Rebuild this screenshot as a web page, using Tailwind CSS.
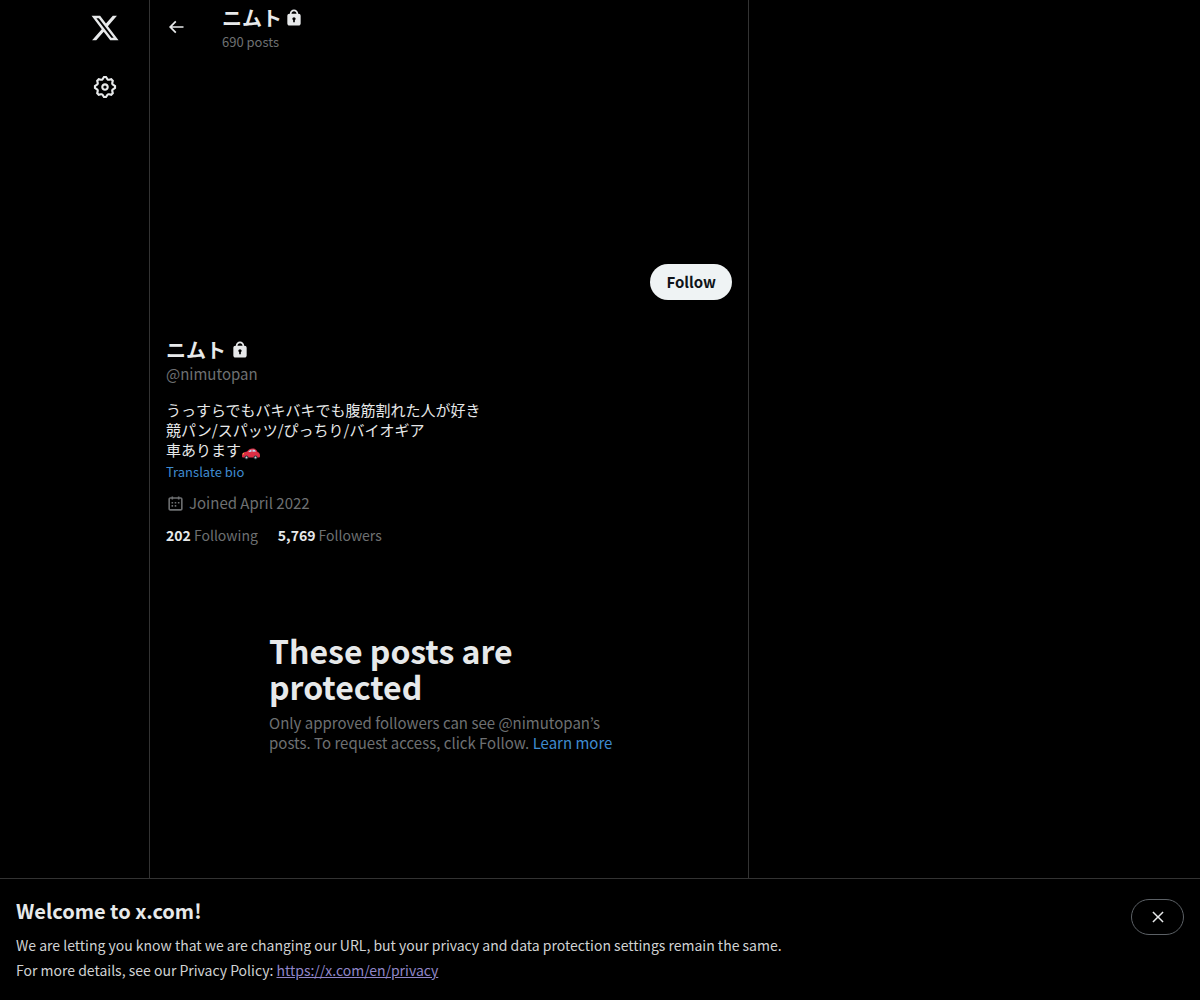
<!DOCTYPE html>
<html lang="en">
<head>
    <meta charset="UTF-8">
    <meta name="viewport" content="width=device-width, initial-scale=1.0">
    <title>ニムト (@nimutopan) / X</title>
    <script src="https://cdn.jsdelivr.net/npm/@tailwindcss/browser@4"></script>
</head>
<body class="bg-black text-[#e7e9ea] font-['Noto_Sans_CJK_JP',sans-serif] text-[15px] leading-5">
    <div class="grid grid-cols-[149px_minmax(0,600px)_1fr] min-h-screen">
        <!-- Sidebar -->
        <header class="flex flex-col items-end pr-[18px]">
            <a href="#" aria-label="X" class="flex items-center justify-center w-[52px] h-14">
                <svg viewBox="0 0 24 24" class="w-[30px] h-[30px] fill-current"><path d="M18.244 2.25h3.308l-7.227 8.26 8.502 11.24H16.17l-5.214-6.817L4.99 21.75H1.68l7.73-8.835L1.254 2.25H8.08l4.713 6.231zm-1.161 17.52h1.833L7.084 4.126H5.117z"/></svg>
            </a>
            <nav>
                <a href="#" aria-label="Settings" class="flex items-center justify-center w-[52px] h-[62px]">
                    <svg viewBox="0 0 24 24" class="w-[26px] h-[26px] fill-current"><path d="M10.54 1.75h2.92l1.57 2.36c.11.17.32.25.53.21l2.53-.59 2.17 2.17-.58 2.54c-.05.2.04.41.21.53l2.36 1.57v2.92l-2.36 1.57c-.17.12-.26.33-.21.53l.58 2.54-2.17 2.17-2.53-.59c-.21-.04-.42.04-.53.21l-1.57 2.36h-2.92l-1.58-2.36c-.11-.17-.32-.25-.52-.21l-2.54.59-2.17-2.17.58-2.54c.05-.2-.03-.41-.21-.53l-2.35-1.57v-2.92L4.1 8.97c.18-.12.26-.33.21-.53L3.73 5.9 5.9 3.73l2.54.59c.2.04.41-.04.52-.21l1.58-2.36zm1.07 2l-.98 1.47C10.05 6.08 9 6.5 7.99 6.27l-1.46-.34-.6.6.33 1.46c.24 1.01-.18 2.07-1.05 2.64l-1.46.98v.78l1.46.98c.87.57 1.29 1.63 1.05 2.64l-.33 1.46.6.6 1.46-.34c1.01-.23 2.06.19 2.64 1.05l.98 1.47h.78l.97-1.47c.58-.86 1.63-1.28 2.65-1.05l1.45.34.61-.6-.34-1.46c-.23-1.01.18-2.07 1.05-2.64l1.47-.98v-.78l-1.47-.98c-.87-.57-1.28-1.63-1.05-2.64l.34-1.46-.61-.6-1.45.34c-1.02.23-2.07-.19-2.65-1.05l-.97-1.47h-.78zM12 10.5c-.83 0-1.5.67-1.5 1.5s.67 1.5 1.5 1.5c.82 0 1.5-.67 1.5-1.5s-.68-1.5-1.5-1.5zM8.5 12c0-1.93 1.56-3.5 3.5-3.5 1.93 0 3.5 1.57 3.5 3.5s-1.57 3.5-3.5 3.5c-1.94 0-3.5-1.57-3.5-3.5z"/></svg>
                </a>
            </nav>
        </header>

        <main class="border-x border-[#333333] pb-32">
            <!-- Top bar -->
            <div class="flex items-center h-[53px] px-4">
                <button aria-label="Back" class="w-14 h-5">
                    <svg viewBox="0 0 24 24" class="w-5 h-5 fill-current"><path d="M7.414 13l5.043 5.04-1.414 1.42L3.586 12l7.457-7.46 1.414 1.42L7.414 11H21v2H7.414z"/></svg>
                </button>
                <div class="pt-[2px]">
                    <h2 class="flex items-center gap-[2px] text-xl leading-6 font-bold">
                        ニムト
                        <svg viewBox="0 0 24 24" class="w-5 h-5 fill-current" role="img" aria-label="Protected account"><path d="M17.5 7H17v-.25c0-2.76-2.24-5-5-5s-5 2.24-5 5V7h-.5C5.12 7 4 8.12 4 9.5v9C4 19.88 5.12 21 6.5 21h11c1.39 0 2.5-1.12 2.5-2.5v-9C20 8.12 18.89 7 17.5 7zM13 14.73V17h-2v-2.27c-.59-.34-1-.99-1-1.73 0-1.1.9-2 2-2 1.11 0 2 .9 2 2 0 .74-.4 1.39-1 1.73zM15 7H9v-.25c0-1.66 1.35-3 3-3 1.66 0 3 1.34 3 3V7z"/></svg>
                    </h2>
                    <p class="text-[13px] leading-4 text-[#6e7072] mt-1">690 posts</p>
                </div>
            </div>

            <!-- Banner image, empty for this account -->
            <div class="h-[199px]"></div>

            <!-- Profile -->
            <section class="px-4 pt-3">
                <div class="flex justify-end h-[72px]">
                    <button class="h-9 px-4 rounded-full bg-[#eff3f4] text-[#0f1419] font-bold">Follow</button>
                </div>
                <h1 class="flex items-center gap-1 text-xl leading-6 font-bold mt-[2px]">
                    ニムト
                    <svg viewBox="0 0 24 24" class="w-5 h-5 fill-current" role="img" aria-label="Protected account"><path d="M17.5 7H17v-.25c0-2.76-2.24-5-5-5s-5 2.24-5 5V7h-.5C5.12 7 4 8.12 4 9.5v9C4 19.88 5.12 21 6.5 21h11c1.39 0 2.5-1.12 2.5-2.5v-9C20 8.12 18.89 7 17.5 7zM13 14.73V17h-2v-2.27c-.59-.34-1-.99-1-1.73 0-1.1.9-2 2-2 1.11 0 2 .9 2 2 0 .74-.4 1.39-1 1.73zM15 7H9v-.25c0-1.66 1.35-3 3-3 1.66 0 3 1.34 3 3V7z"/></svg>
                </h1>
                <p class="text-[#6e7072] mt-[2px]">@nimutopan</p>
                <p lang="ja" class="mt-4">
                    うっすらでもバキバキでも腹筋割れた人が好き<br>
                    競パン/スパッツ/ぴっちり/バイオギア<br>
                    車あります<svg viewBox="0 0 36 36" class="inline-block w-[18px] h-[18px] ml-px align-text-bottom" role="img" aria-label="Automobile"><path fill="#DD2E44" d="M0 29c0-5 1-8 6-9l4-1c3-4 6-6 11-6 6 0 9 3 10 7 4 1 5 4 5 8 0 2-1 3-3 3H3c-2 0-3-1-3-2z"/><path fill="#BBDDF5" d="M13 19c2-2 4-3.500 6-4v4.500l-6 .5zM21 15c4 0 6 1.500 7 4l-7 .5z"/><circle cx="9" cy="31" r="4" fill="#292F33"/><circle cx="9" cy="31" r="2" fill="#CCD6DD"/><circle cx="27" cy="31" r="4" fill="#292F33"/><circle cx="27" cy="31" r="2" fill="#CCD6DD"/><path fill="#FFCC4D" d="M1 25c0-2 1-3 3-3 0 2-1 3-3 3z"/></svg>
                </p>
                <button class="block text-[13px] leading-4 text-[#3f8bd0] mt-1">Translate bio</button>
                <p class="flex items-center gap-1 text-[#6e7072] mt-[13px]">
                    <svg viewBox="0 0 24 24" class="w-[19px] h-[19px] fill-current"><path d="M7 4V3h2v1h6V3h2v1h1.5C19.89 4 21 5.12 21 6.5v12c0 1.38-1.11 2.5-2.5 2.5h-13C4.12 21 3 19.88 3 18.5v-12C3 5.12 4.12 4 5.5 4H7zm0 2H5.500c-.27 0-.5.22-.5.5v12c0 .28.23.5.5.5h13c.28 0 .5-.22.5-.5v-12c0-.28-.22-.5-.5-.5H17v1h-2V6H9v1H7V6zm0 6h2v-2H7v2zm0 4h2v-2H7v2zm4-4h2v-2h-2v2zm0 4h2v-2h-2v2zm4-4h2v-2h-2v2z"/></svg>
                    Joined April 2022
                </p>
                <div class="flex gap-5 text-sm leading-5 text-[#6e7072] mt-3">
                    <a href="#"><span class="font-bold text-[#e7e9ea]">202</span> Following</a>
                    <a href="#"><span class="font-bold text-[#e7e9ea]">5,769</span> Followers</a>
                </div>
            </section>

            <!-- Protected notice -->
            <section class="max-w-[360px] mx-auto mt-[87px]">
                <h2 class="text-[32px] leading-9 font-bold">These posts are protected</h2>
                <p class="text-[#6e7072] mt-[9px]">Only approved followers can see @nimutopan’s posts. To request access, click Follow. <a href="#" class="text-[#3f8bd0]">Learn more</a></p>
            </section>
        </main>
    </div>

    <!-- URL change notice -->
    <aside class="fixed inset-x-0 bottom-0 flex items-start justify-between bg-black border-t border-[#333333] px-4 pt-5 pb-[17px]">
        <div>
            <h2 class="text-xl leading-6 font-bold">Welcome to x.com!</h2>
            <p class="text-sm leading-[25px] text-[#d0d2d3] mt-[10px]">
                We are letting you know that we are changing our URL, but your privacy and data protection settings remain the same.<br>
                For more details, see our Privacy Policy: <a href="https://x.com/en/privacy" class="text-[#9086c8] underline">https://x.com/en/privacy</a>
            </p>
        </div>
        <button aria-label="Close" class="flex items-center justify-center w-[53px] h-9 rounded-full border border-[#5c6166]">
            <svg viewBox="0 0 24 24" class="w-[18px] h-[18px] fill-current"><path d="M10.59 12L4.54 5.96l1.42-1.42L12 10.59l6.04-6.05 1.42 1.42L13.41 12l6.05 6.04-1.42 1.42L12 13.41l-6.04 6.05-1.42-1.42L10.59 12z"/></svg>
        </button>
    </aside>
</body>
</html>
